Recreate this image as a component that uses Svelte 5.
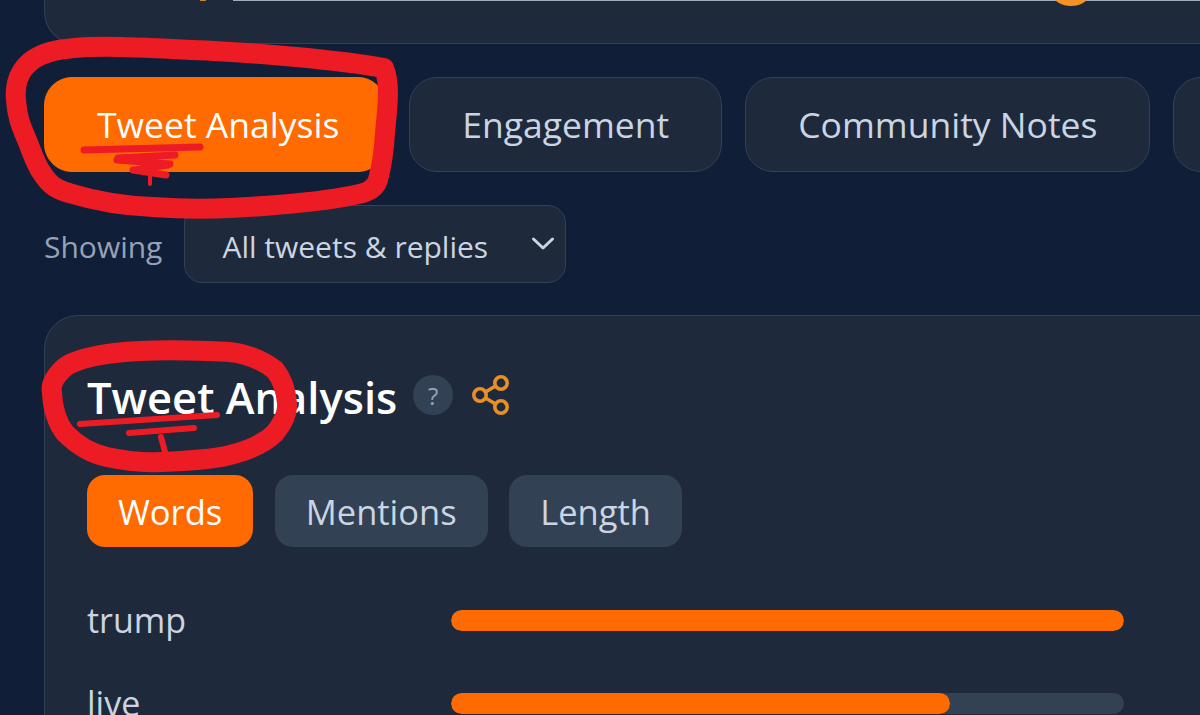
<script>
  // Tweet analysis dashboard, zoomed crop with hand drawn red marks on top
  const tabs = [
    { label: "Tweet Analysis", active: true },
    { label: "Engagement" },
    { label: "Community Notes" },
    { label: "" }
  ];
  const subTabs = [
    { label: "Words", active: true },
    { label: "Mentions" },
    { label: "Length" }
  ];
  const words = [
    { word: "trump", pct: 100 },
    { word: "live", pct: 74.2 }
  ];
</script>

<div class="page">
  <section class="top-card">
    <div class="top-line"></div>
    <div class="top-dot"></div>
    <div class="top-mark"></div>
  </section>

  <nav class="tabs">
    {#each tabs as tab}
      <button class="tab" class:active={tab.active}>{tab.label}</button>
    {/each}
  </nav>

  <div class="filter">
    <span class="filter-label">Showing</span>
    <div class="select">
      <span class="select-value">All tweets &amp; replies</span>
      <svg width="26" height="16" viewBox="0 0 26 16" fill="none" stroke="#cbd5e1" stroke-width="3" stroke-linecap="round" stroke-linejoin="round">
        <path d="M3.5 3l9.500 9 9.500-9" />
      </svg>
    </div>
  </div>

  <section class="card">
    <header class="card-head">
      <h2>Tweet Analysis</h2>
      <span class="help">?</span>
      <svg class="share" width="40" height="42" viewBox="0 0 40 42" fill="none" stroke="#ea8f24" stroke-width="3.6">
        <circle cx="10" cy="21" r="6.200" />
        <circle cx="31" cy="9" r="6.200" />
        <circle cx="31" cy="33" r="6.200" />
        <path d="M15.500 18l10-6M15.500 24l10 6" />
      </svg>
    </header>

    <div class="sub-tabs">
      {#each subTabs as tab}
        <button class="sub-tab" class:active={tab.active}>{tab.label}</button>
      {/each}
    </div>

    <div class="rows">
      {#each words as row}
        <div class="row">
          <span class="word">{row.word}</span>
          <div class="track">
            <div class="fill" style="width: {row.pct}%"></div>
          </div>
        </div>
      {/each}
    </div>
  </section>

  <svg class="marks" width="1200" height="715" viewBox="0 0 1200 715" fill="none" stroke="#ed1c24" stroke-linecap="round" stroke-linejoin="round">
    <path stroke-width="20" d="M384 68C340 60 250 52 191 50C130 47 80 44 50 52C22 60 14 80 16 100C17 118 22 128 27 140C33 155 36 165 42 173C50 186 58 190 69 193C95 201 125 206 153 207C180 209 205 209 230 208C270 206 310 203 344 197C362 194 374 192 378 180C382 165 384 150 385 133C387 110 391 85 384 68Z" />
    <path stroke-width="7" d="M84 150L200 147M118 158L175 155M117 160L170 164M134 170L168 165M133 170L166 175" />
    <path stroke-width="4" d="M150 175V184" />
    <path stroke-width="20" d="M230 352C190 350 150 349 115 353C90 356 75 360 65 367C55 376 50 385 52 393C53 412 58 424 65 433C78 446 92 454 107 457C125 461 143 463 161 462C185 461 210 460 230 455C250 450 265 443 275 433C283 423 288 413 287 403C286 390 282 379 275 370C262 360 248 354 230 352Z" />
    <path stroke-width="6" d="M80 424L217 415M129 433L194 428M161 437L165 452" />
  </svg>
</div>

<style>
  :global(body) {
    margin: 0;
    background: #111e37;
  }

  .page {
    position: relative;
    width: 1200px;
    height: 715px;
    overflow: hidden;
    background: #111e37;
    font-family: "Open Sans", "Noto Sans", sans-serif;
  }

  .top-card {
    position: relative;
    height: 44px;
    margin-left: 44px;
    width: 1300px;
    box-sizing: border-box;
    background: #1e293b;
    border: 1px solid #334155;
    border-top: none;
    border-radius: 0 0 32px 32px;
  }

  .top-line {
    position: absolute;
    top: 0;
    left: 188px;
    right: 0;
    height: 1px;
    background: #a3adba;
  }

  .top-dot {
    position: absolute;
    top: -14px;
    left: 1009px;
    width: 34px;
    height: 20px;
    border-radius: 50%;
    background: #f39325;
  }

  .top-mark {
    position: absolute;
    top: 0;
    left: 155px;
    width: 6px;
    height: 1px;
    background: #c8842e;
  }

  .tabs {
    display: flex;
    gap: 23px;
    margin: 33px 0 0 44px;
    width: 1300px;
  }

  .tab {
    height: 95px;
    box-sizing: border-box;
    padding: 0 52px 2px;
    font: 500 35.500px "Open Sans", "Noto Sans", sans-serif;
    color: #cbd5e1;
    background: #1e293b;
    border: 1px solid #334155;
    border-radius: 28px;
    white-space: nowrap;
  }

  .tab:empty {
    width: 100px;
  }

  .tab.active {
    padding: 0 46px 2px 52px;
    color: #fff;
    background: #ff6b00;
    border-color: #ff6b00;
  }

  .filter {
    display: flex;
    align-items: center;
    gap: 22px;
    margin: 33px 0 0 44px;
  }

  .filter-label {
    padding-top: 4px;
    font-size: 30px;
    color: #94a3b8;
  }

  .select {
    display: flex;
    align-items: center;
    justify-content: space-between;
    width: 382px;
    height: 78px;
    box-sizing: border-box;
    padding: 0 9px 0 37px;
    font-size: 30px;
    color: #cbd5e1;
    background: #1e293b;
    border: 1px solid #334155;
    border-radius: 18px;
  }

  .select-value {
    padding-top: 4px;
  }

  .card {
    width: 1300px;
    height: 500px;
    box-sizing: border-box;
    margin: 32px 0 0 44px;
    padding: 48px 42px 0;
    background: #1e293b;
    border: 1px solid #334155;
    border-radius: 34px;
  }

  .card-head {
    display: flex;
    align-items: center;
    height: 66px;
  }

  h2 {
    margin: 0;
    font-size: 43.500px;
    font-weight: 600;
    color: #fff;
    white-space: nowrap;
  }

  .help {
    display: flex;
    align-items: center;
    justify-content: center;
    width: 40px;
    height: 40px;
    margin: 0 0 4px 16px;
    border-radius: 50%;
    background: #334155;
    font-size: 24px;
    font-weight: 500;
    color: #94a3b8;
  }

  .share {
    margin: 0 0 4px 17px;
  }

  .sub-tabs {
    display: flex;
    gap: 21.500px;
    margin-top: 45px;
  }

  .sub-tab {
    height: 72px;
    padding: 0 31px;
    font: 400 34.500px "Open Sans", "Noto Sans", sans-serif;
    color: #cbd5e1;
    background: #334155;
    border: none;
    border-radius: 18px;
  }

  .sub-tab.active {
    color: #fff;
    background: #ff6b00;
  }

  .rows {
    display: flex;
    flex-direction: column;
    gap: 39px;
    margin-top: 51px;
    width: 1037px;
  }

  .row {
    display: flex;
    align-items: center;
    height: 44px;
  }

  .word {
    width: 364px;
    flex: none;
    font-size: 34px;
    color: #cbd5e1;
  }

  .track {
    width: 673px;
    height: 21px;
    background: #334155;
    border-radius: 11px;
    overflow: hidden;
  }

  .fill {
    height: 100%;
    background: #ff6b00;
    border-radius: 11px;
  }

  .marks {
    position: absolute;
    top: 0;
    left: 0;
    pointer-events: none;
  }
</style>
